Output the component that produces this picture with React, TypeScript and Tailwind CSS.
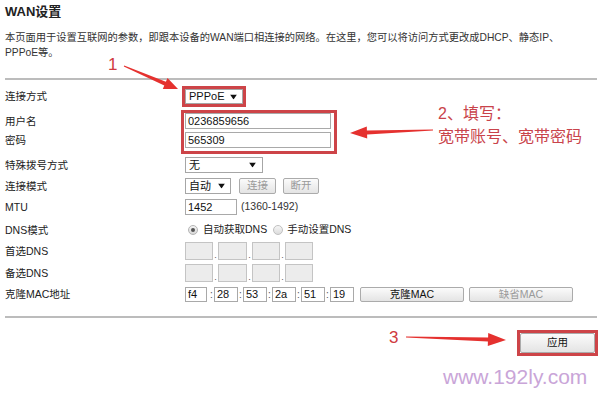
import React from "react";

const CJK = "font-['Liberation_Sans','Noto_Sans_CJK_SC',sans-serif]";

function arrowPts(
  x1: number, y1: number, x2: number, y2: number,
  headLen: number, headW: number, neckW: number, tailW: number
) {
  const dx = x2 - x1, dy = y2 - y1;
  const L = Math.hypot(dx, dy);
  const ux = dx / L, uy = dy / L;
  const nx = -uy, ny = ux;
  const bx = x2 - ux * headLen, by = y2 - uy * headLen;
  const p = (x: number, y: number) => `${x.toFixed(1)},${y.toFixed(1)}`;
  return [
    p(x1 + nx * tailW / 2, y1 + ny * tailW / 2),
    p(bx + nx * neckW / 2, by + ny * neckW / 2),
    p(bx + nx * headW / 2, by + ny * headW / 2),
    p(x2, y2),
    p(bx - nx * headW / 2, by - ny * headW / 2),
    p(bx - nx * neckW / 2, by - ny * neckW / 2),
    p(x1 - nx * tailW / 2, y1 - ny * tailW / 2),
  ].join(" ");
}

function Select({ w, text, tri }: { w: string; text: string; tri: string }) {
  return (
    <div className={`relative h-full ${w} border border-[#a6a6a6] bg-white flex items-center pl-[3px] text-[11px] text-[#111]`}>
      <span>{text}</span>
      <svg className={`absolute ${tri} top-1/2 -translate-y-1/2`} width="7" height="5" viewBox="0 0 7 5">
        <polygon points="0,0 7,0 3.5,5" fill="#111" />
      </svg>
    </div>
  );
}

function Btn({ w, text, dim }: { w: string; text: string; dim?: boolean }) {
  return (
    <div
      className={`h-full ${w} border border-[#ababab] rounded-[2px] bg-gradient-to-b from-[#fbfbfb] to-[#e4e4e4] flex items-center justify-center text-[10.5px] ${dim ? "text-[#9a9a9a]" : "text-[#111]"}`}
    >
      {text}
    </div>
  );
}

function Label({ children }: { children: React.ReactNode }) {
  return <div className="w-[180px] shrink-0 text-[10.5px] text-[#222] leading-none">{children}</div>;
}

function DnsRow() {
  return (
    <div className="flex items-end h-full">
      {[0, 1, 2, 3].map((i) => (
        <React.Fragment key={i}>
          {i > 0 && <span className="w-[5px] text-[9px] leading-none text-[#555] text-center">.</span>}
          <div className={`h-full ${i === 1 ? "w-[29px]" : "w-[28px]"} border border-[#c4c4c4] bg-[#ececec]`} />
        </React.Fragment>
      ))}
    </div>
  );
}

export default function App() {
  const mac = ["f4", "28", "53", "2a", "51", "19"];
  return (
    <div className={`relative w-[600px] h-[393px] bg-white overflow-hidden ${CJK} text-[#222]`}>
      {/* header */}
      <div className="px-[5px]">
        <div className="pt-[4px] text-[13px] leading-[16px] font-bold text-[#222]">WAN设置</div>
        <div className="mt-[10px] text-[10.25px] leading-[15px] text-[#333]">
          本页面用于设置互联网的参数，即跟本设备的WAN端口相连接的网络。在这里，您可以将访问方式更改成DHCP、静态IP、
          <br />
          PPPoE等。
        </div>
      </div>
      <div className="mt-[18px] ml-[5px] mr-[3px] h-[2px] bg-[#bcbcbc]" />

      {/* form */}
      <div className="pl-[5px]">
        {/* 连接方式 */}
        <div className="mt-[9px] h-[15px] flex items-center">
          <Label>连接方式</Label>
          <div className="h-full outline outline-[3px] outline-[#cd4448]">
            <Select w="w-[58px]" text="PPPoE" tri="right-[5px]" />
          </div>
        </div>

        {/* 用户名 / 密码 */}
        <div className="mt-[9px] flex">
          <div className="w-[180px] shrink-0 flex flex-col gap-[3px]">
            <div className="h-[16px] flex items-center text-[10.5px] leading-none">用户名</div>
            <div className="h-[16px] flex items-center text-[10.5px] leading-none">密码</div>
          </div>
          <div className="-ml-[1px] w-[150px] pl-[1px] flex flex-col gap-[3px] outline outline-[3px] outline-[#cd4448]">
            <div className="h-[16px] w-[146px] border border-[#a9a9a9] bg-white flex items-center pl-[2px] text-[11px] text-[#111]">0236859656</div>
            <div className="h-[16px] w-[146px] border border-[#a9a9a9] bg-white flex items-center pl-[2px] text-[11px] text-[#111]">565309</div>
            <div className="h-0" />
          </div>
        </div>

        {/* 特殊拨号方式 */}
        <div className="mt-[6px] h-[16px] flex items-center">
          <Label>特殊拨号方式</Label>
          <Select w="w-[78px]" text="无" tri="right-[6px]" />
        </div>

        {/* 连接模式 */}
        <div className="mt-[5px] h-[16px] flex items-center">
          <Label>连接模式</Label>
          <Select w="w-[46px]" text="自动" tri="right-[5px]" />
          <div className="ml-[8px] h-full"><Btn w="w-[37px]" text="连接" dim /></div>
          <div className="ml-[7px] h-full"><Btn w="w-[36px]" text="断开" dim /></div>
        </div>

        {/* MTU */}
        <div className="mt-[5px] h-[16px] flex items-center">
          <Label>MTU</Label>
          <div className="h-full w-[52px] border border-[#a9a9a9] bg-white flex items-center pl-[2px] text-[11px] text-[#111]">1452</div>
          <span className="ml-[4px] text-[10.5px] text-[#333]">(1360-1492)</span>
        </div>

        {/* DNS模式 */}
        <div className="mt-[7px] h-[16px] flex items-center">
          <Label>DNS模式</Label>
          <div className="ml-[3px] w-[10px] h-[10px] rounded-full border border-[#b5b5b5] bg-gradient-to-b from-[#f4f4f4] to-[#d8d8d8] flex items-center justify-center">
            <div className="w-[4px] h-[4px] rounded-full bg-[#555]" />
          </div>
          <span className="ml-[5px] text-[10.5px] text-[#222]">自动获取DNS</span>
          <div className="ml-[6px] w-[10px] h-[10px] rounded-full border border-[#c0c0c0] bg-gradient-to-b from-[#f6f6f6] to-[#dcdcdc]" />
          <span className="ml-[4px] text-[10.5px] text-[#222]">手动设置DNS</span>
        </div>

        {/* 首选DNS */}
        <div className="mt-[4px] h-[18px] flex items-center">
          <Label>首选DNS</Label>
          <DnsRow />
        </div>

        {/* 备选DNS */}
        <div className="mt-[4px] h-[18px] flex items-center">
          <Label>备选DNS</Label>
          <DnsRow />
        </div>

        {/* 克隆MAC地址 */}
        <div className="mt-[5px] h-[15px] flex items-center">
          <Label>克隆MAC地址</Label>
          {mac.map((m, i) => (
            <React.Fragment key={m}>
              {i > 0 && <span className="w-[5px] text-[10px] leading-none text-[#555] text-center">:</span>}
              <div className={`h-full ${i === 0 ? "w-[22px]" : "w-[24px]"} ${i === 0 ? "mr-[2px]" : ""} border border-[#a9a9a9] bg-white flex items-center pl-[2px] text-[11px] text-[#111]`}>{m}</div>
            </React.Fragment>
          ))}
          <div className="ml-[6px] h-full"><Btn w="w-[104px]" text="克隆MAC" /></div>
          <div className="ml-[5px] h-full"><Btn w="w-[104px]" text="缺省MAC" dim /></div>
        </div>
      </div>

      <div className="mt-[14px] ml-[5px] mr-[3px] h-[2px] bg-[#bcbcbc]" />

      {/* apply */}
      <div className="mt-[15px] flex justify-end pr-[5px]">
        <div className="h-[20px] outline outline-[3px] outline-[#cd4448]">
          <Btn w="w-[75px]" text="应用" />
        </div>
      </div>

      {/* watermark */}
      <div className="absolute left-[443px] top-[364px] text-[21px] leading-[26px] text-[#c9a5d8] font-['Liberation_Sans',sans-serif]">
        www.192ly.com
      </div>

      {/* annotations */}
      <div className="absolute left-[108px] top-[55px] text-[17px] leading-[20px] text-[#cf3a40] font-['Liberation_Sans',sans-serif]">1</div>
      <div className="absolute left-[438px] top-[102px] text-[16px] leading-[23px] text-[#c9434b]">
        2、填写：
        <br />
        宽带账号、宽带密码
      </div>
      <div className="absolute left-[389px] top-[328px] text-[17px] leading-[20px] text-[#cf3a40] font-['Liberation_Sans',sans-serif]">3</div>

      <svg className="absolute inset-0 pointer-events-none" width="600" height="393">
        <polygon points={arrowPts(124, 66, 178, 89, 14, 12, 4, 1)} fill="#e5312f" />
        <polygon points={arrowPts(433, 130, 350, 133, 17, 12, 4, 1.2)} fill="#e5312f" />
        <polygon points={arrowPts(406, 337, 506, 340, 18, 13, 4, 1.2)} fill="#e5312f" />
      </svg>
    </div>
  );
}
